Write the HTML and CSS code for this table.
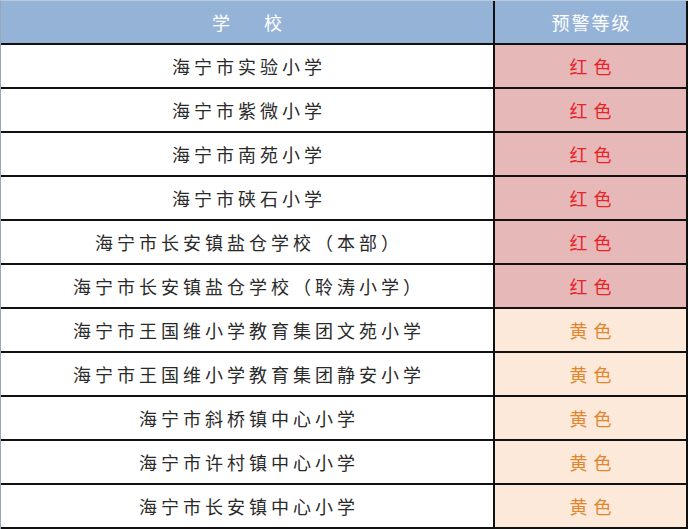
FILE: index.html
```html
<!DOCTYPE html>
<html lang="zh-CN">
<head>
<meta charset="utf-8">
<title>预警等级</title>
<link rel="stylesheet" href="styles.css">
</head>
<body>
<div class="grid">
  <div class="cell head">学　校</div>
  <div class="cell head lvl">预警等级</div>

  <div class="cell name">海宁市实验小学</div>
  <div class="cell red">红色</div>
  <div class="cell name">海宁市紫微小学</div>
  <div class="cell red">红色</div>
  <div class="cell name">海宁市南苑小学</div>
  <div class="cell red">红色</div>
  <div class="cell name">海宁市硖石小学</div>
  <div class="cell red">红色</div>
  <div class="cell name">海宁市长安镇盐仓学校（本部）</div>
  <div class="cell red">红色</div>
  <div class="cell name">海宁市长安镇盐仓学校（聆涛小学）</div>
  <div class="cell red">红色</div>
  <div class="cell name">海宁市王国维小学教育集团文苑小学</div>
  <div class="cell yellow">黄色</div>
  <div class="cell name">海宁市王国维小学教育集团静安小学</div>
  <div class="cell yellow">黄色</div>
  <div class="cell name">海宁市斜桥镇中心小学</div>
  <div class="cell yellow">黄色</div>
  <div class="cell name">海宁市许村镇中心小学</div>
  <div class="cell yellow">黄色</div>
  <div class="cell name">海宁市长安镇中心小学</div>
  <div class="cell yellow">黄色</div>
</div>
</body>
</html>
```
FILE: styles.css
```css
html, body {
  margin: 0;
  padding: 0;
  background: #ffffff;
}
body {
  font-family: "Noto Sans CJK SC", "Noto Sans", sans-serif;
}
.grid {
  width: 688px;
  height: 529px;
  box-sizing: border-box;
  display: grid;
  grid-template-columns: 492px 191px;
  grid-template-rows: repeat(12, 42px);
  gap: 2px;
  background: #111111;
  border-top: 1px solid #b9c9de;
  border-left: 1px solid #9aa6b4;
  padding: 0 2px 2px 0;
}
.cell {
  display: flex;
  align-items: center;
  justify-content: center;
  font-size: 18px;
  letter-spacing: 4px;
  text-indent: 4px;
  white-space: nowrap;
  background: #ffffff;
  color: #2a2a2a;
}
.head {
  background: #95b3d7;
  color: #ffffff;
  letter-spacing: 8px;
  text-indent: 8px;
}
.head.lvl {
  font-size: 18px;
  letter-spacing: 2px;
  text-indent: 2px;
}
.red {
  background: #e6b8b7;
  color: #e8232a;
  letter-spacing: 6px;
  text-indent: 6px;
}
.yellow {
  background: #fde9d9;
  color: #e0862e;
  letter-spacing: 6px;
  text-indent: 6px;
}
```
